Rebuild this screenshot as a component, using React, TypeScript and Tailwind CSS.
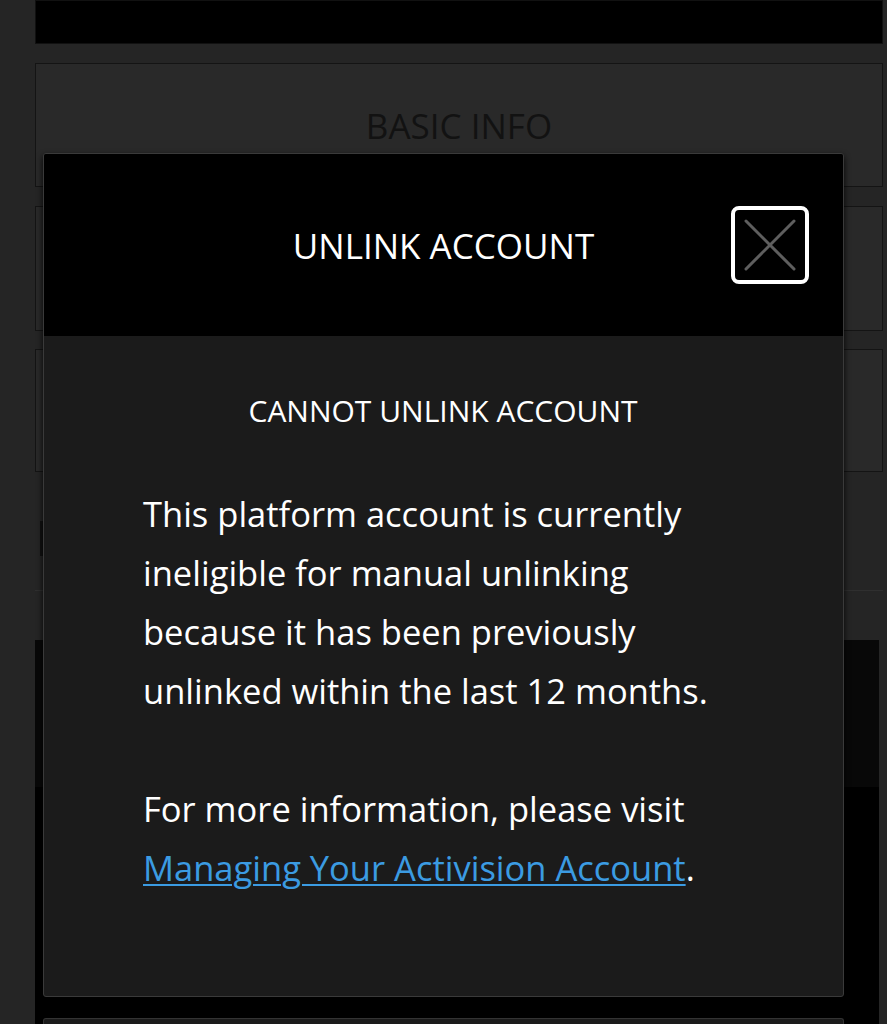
import React from "react";

export default function App() {
  return (
    <div className="relative min-h-[1024px] w-full overflow-hidden bg-[#252525] font-['Open_Sans',sans-serif]">
      {/* background page */}
      <div className="flex flex-col pl-[35px] pr-[4px]">
        <div className="h-[44px] border border-[#111] bg-black" />
        <div className="mt-[19px] flex h-[124px] items-center justify-center border border-[#141414] bg-[#292929] text-[35px] leading-none text-[#121212]">
          BASIC INFO
        </div>
        <div className="mt-[19px] h-[125px] border border-[#141414] bg-[#292929]" />
        <div className="mt-[18px] h-[123px] border border-[#141414] bg-[#292929]" />
        <div className="ml-[5px] mt-[49px] h-[35px] border-l-4 border-[#111]" />
        <div className="mt-[34px] h-px bg-[#2f2f2f]" />
        <div className="mr-[4px] mt-[49px] flex h-[384px] flex-col bg-black">
          <div className="h-[147px] bg-[#080808]" />
          <div className="h-[231px]" />
          <div className="ml-[8px] mr-[35px] flex-1 rounded-t-[3px] border border-b-0 border-[#333] bg-[#1b1b1b]" />
        </div>
      </div>

      {/* modal */}
      <div className="absolute left-[43px] top-[153px] w-[801px] overflow-hidden rounded-[3px] border border-[#3a3a3a] bg-[#1b1b1b] shadow-[0_3px_6px_rgba(0,0,0,0.9)]">
        <div className="grid h-[182px] grid-cols-[1fr_auto_1fr] items-center bg-black">
          <div />
          <h2 className="text-[35px] leading-none text-white">UNLINK ACCOUNT</h2>
          <div className="flex justify-end pr-[34px]">
            <button className="flex h-[78px] w-[78px] items-center justify-center rounded-[8px] border-4 border-white bg-black">
              <svg width="70" height="70" viewBox="0 0 70 70" fill="none">
                <path d="M11 11 L59 59 M59 11 L11 59" stroke="#5e5e5e" strokeWidth="3" strokeLinecap="round" />
              </svg>
            </button>
          </div>
        </div>
        <div className="pb-[99px] pl-[99px] pr-[100px] pt-[54px]">
          <h3 className="text-center text-[30px] leading-[41px] text-white">CANNOT UNLINK ACCOUNT</h3>
          <div className="mt-[53px] text-[34.5px] leading-[59px] text-white">
            <p>
              This platform account is currently ineligible for manual unlinking because it has been
              previously unlinked within the last 12 months.
            </p>
            <p className="mt-[59px]">
              For more information, please visit{" "}
              <a href="#" className="text-[#3b9be2] underline decoration-2 underline-offset-[3px]">
                Managing Your Activision Account
              </a>
              .
            </p>
          </div>
        </div>
      </div>
    </div>
  );
}
